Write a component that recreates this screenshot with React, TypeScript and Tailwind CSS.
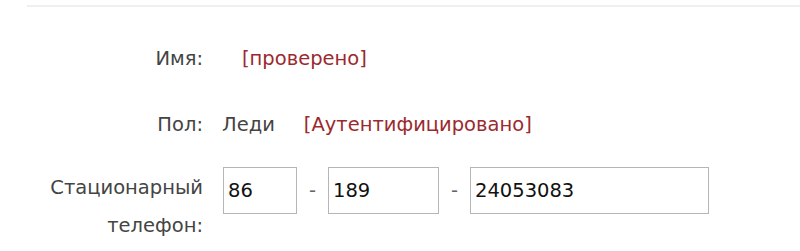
export default function App() {
  return (
    <div className="w-[800px] h-[251px] bg-white overflow-hidden" style={{ fontFamily: '"DejaVu Sans", Verdana, sans-serif' }}>
      {/* top divider */}
      <div className="ml-[27px] mt-[5px] h-[2px] bg-[#efefef]" />

      <div className="pt-[36px] text-[19.5px] text-[#444]">
        {/* name */}
        <div className="flex items-center h-[32px]">
          <div className="w-[203px] text-right">Имя:</div>
          <div className="pl-[39px] text-[#9b2a2f]">[проверено]</div>
        </div>

        {/* gender */}
        <div className="flex items-center h-[32px] mt-[34px]">
          <div className="w-[203px] text-right">Пол:</div>
          <div className="pl-[19px] text-[#444]">Леди</div>
          <div className="pl-[29px] text-[#9b2a2f]">[Аутентифицировано]</div>
        </div>

        {/* phone */}
        <div className="flex items-start mt-[26px]">
          <div className="w-[203px] text-right leading-[38px] mt-[2px]">
            Стационарный
            <br />
            телефон:
          </div>
          <div className="flex items-center pl-[20px]">
            <input
              defaultValue="86"
              className="w-[74px] h-[47px] border border-[#b5b5b5] px-[4px] text-[19.5px] text-[#111] outline-none"
            />
            <span className="w-[31px] text-center text-[#666]">-</span>
            <input
              defaultValue="189"
              className="w-[111px] h-[47px] border border-[#b5b5b5] px-[4px] text-[19.5px] text-[#111] outline-none"
            />
            <span className="w-[31px] text-center text-[#666]">-</span>
            <input
              defaultValue="24053083"
              className="w-[239px] h-[47px] border border-[#b5b5b5] px-[4px] text-[19.5px] text-[#111] outline-none"
            />
          </div>
        </div>
      </div>
    </div>
  );
}
